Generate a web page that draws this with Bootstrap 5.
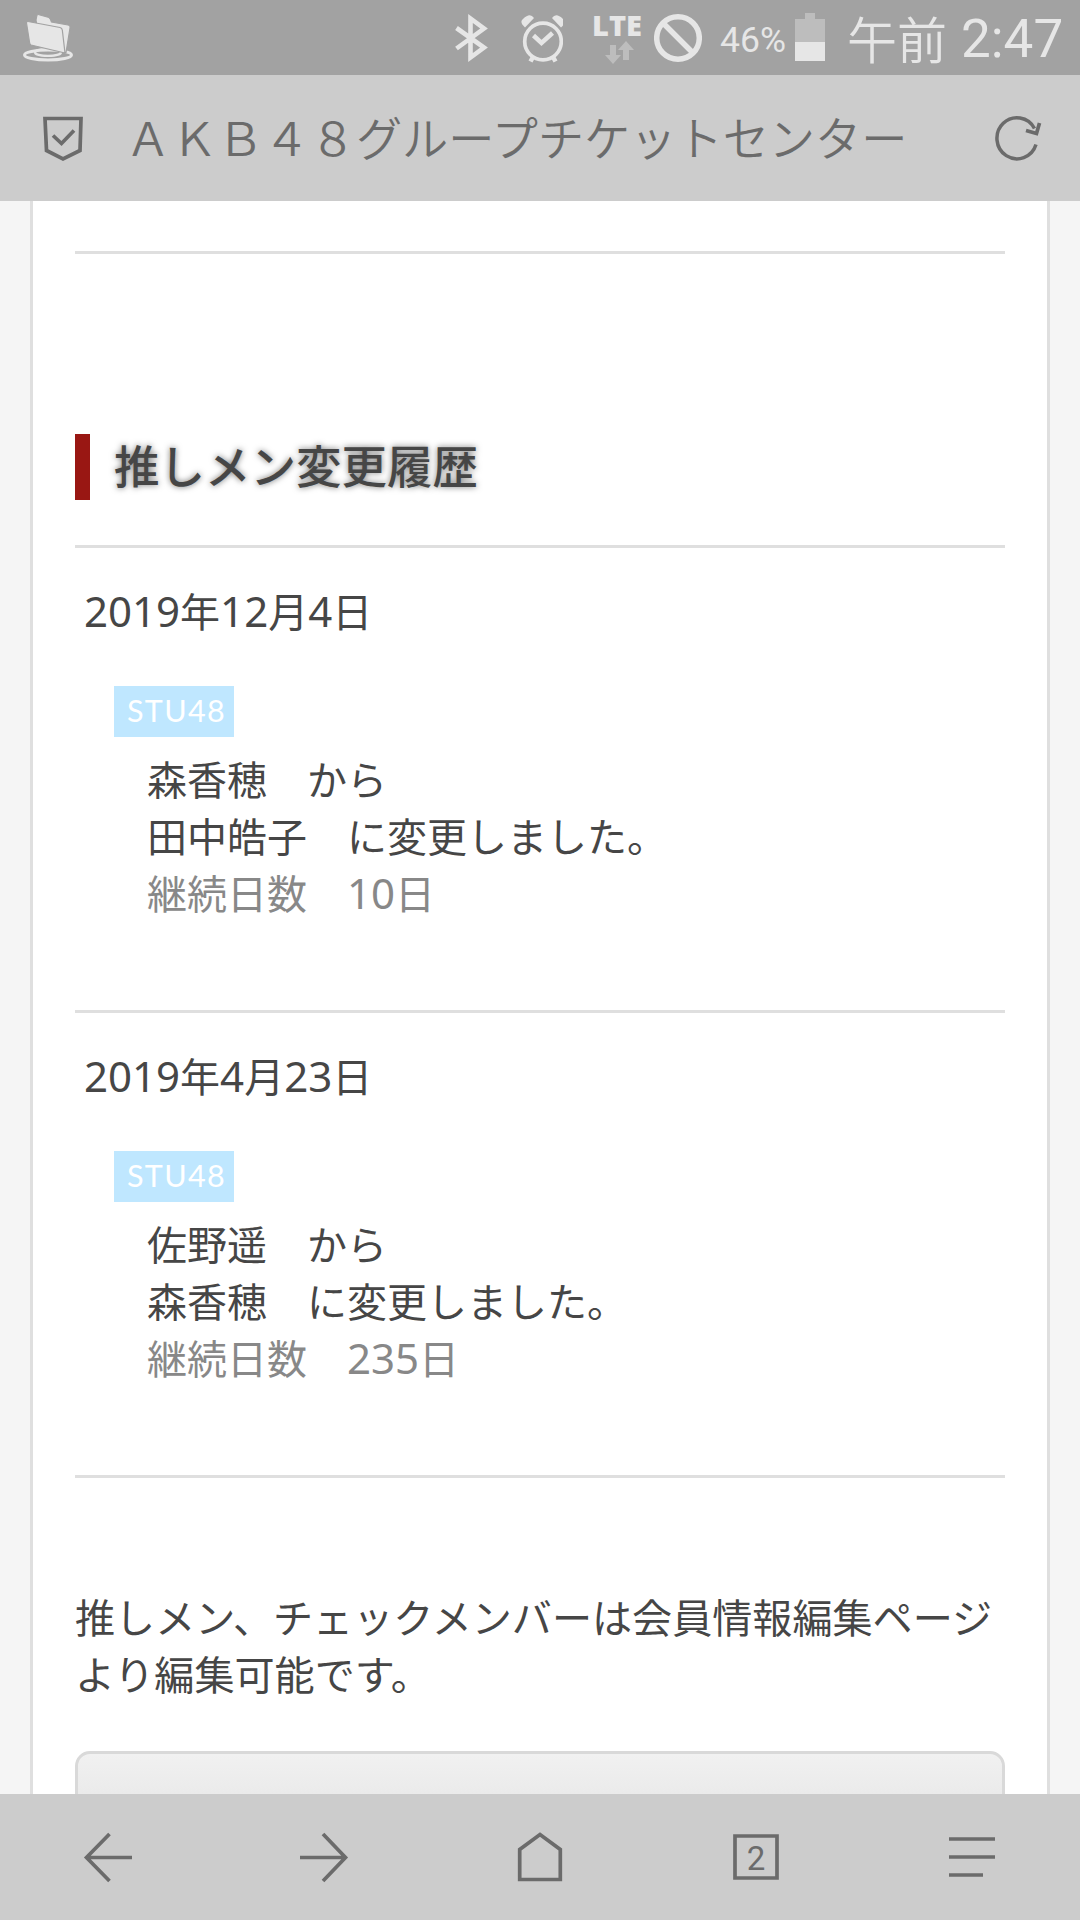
<!DOCTYPE html>
<html lang="ja">
<head>
<meta charset="utf-8">
<meta name="viewport" content="width=device-width, initial-scale=1">
<title>ＡＫＢ４８グループチケットセンター</title>
<link href="https://cdn.jsdelivr.net/npm/bootstrap@5.3.0/dist/css/bootstrap.min.css" rel="stylesheet">
<style>
html,body{height:100%}
body{font-family:"Noto Sans CJK JP",sans-serif;color:#464646;background:#f5f5f5;font-size:40px;line-height:57px;overflow:hidden}
svg{display:block;flex:none}
.phone{width:1080px;height:1920px}
.statusbar{height:75px;background:#a2a2a2;color:#e6e6e6;line-height:75px;font-family:Roboto,"Noto Sans CJK JP",sans-serif}
.pct{font-size:35.5px;width:75px;margin-left:18px;padding-top:3px}
.ampm{font-size:50px;width:100px;margin-left:20px;font-family:"Noto Sans CJK JP",sans-serif;font-weight:350}
.clock{font-size:53px;margin-left:14px;padding-top:2px}
.lte{width:50px;margin-left:29px;height:75px;padding-top:9px}
.lte b{font:800 29px/31px "Open Sans",sans-serif}
.addressbar{height:126px;background:#ccc;color:#6b6b6b}
.site-title{font-size:46.2px;font-weight:350;margin-left:42px;line-height:66px;padding-bottom:5px}
.page{width:1020px;margin:0 30px;border:solid #dfdfdf;border-width:0 3px;background:#fff;padding:50px 42px 0}
.rule{border-top:3px solid #dfdfdf}
.section-title{margin:180px 0 45px;border-left:15px solid #991713;padding-left:24px;font-size:45.5px;line-height:61px;height:66px;font-weight:500;text-shadow:0 0 6px #777}
.entry{height:465px;padding:32px 0 0 9px}
.num{font:42px/40px "Noto Sans",sans-serif}
.day{height:60px;line-height:60px}
.group-tag{width:120px;height:51px;margin:46px 0 13px 30px;background:#bfe7ff;color:#fff;font:30.5px/49px Lato,sans-serif;letter-spacing:1.3px;border-radius:0;padding-left:13px}
.detail{margin-left:63px}
.dim{color:#888}
.note{margin:109px -10px 0 0;font-size:40.1px}
.edit-btn{margin-top:50px;height:100px;border:3px solid #d9d9d9;border-radius:15px;background:linear-gradient(#f1f1f1,#e2e2e2)}
.toolbar{height:126px;background:#ccc;color:#6b6b6b}
.ico{fill:none;stroke:currentColor;stroke-width:3.7}
</style>
<script src="https://cdn.jsdelivr.net/npm/bootstrap@5.3.0/dist/js/bootstrap.bundle.min.js"></script>
</head>
<body>
<div class="phone d-flex flex-column overflow-hidden">
  <header class="statusbar d-flex flex-shrink-0">
    <svg width="80" height="75" fill="#e6e6e6"><ellipse cx="48" cy="55" rx="23.500" ry="5" fill="none" stroke="#e6e6e6" stroke-width="3"/><ellipse cx="48" cy="52.500" rx="13" ry="3.400" fill="none" stroke="#e6e6e6" stroke-width="2.200"/><path stroke="#a2a2a2" stroke-width="1.200" d="M36 20L37 15Q38 14 40 15L49 17.500Q50.500 18.500 51.500 22L68 25Q70.500 25.500 70 28L66 52.500L40 46z"/><path stroke="#a2a2a2" stroke-width="1.200" d="M28 21.500L60 27.500Q62 28 62.300 30L65 53L31 45Q29.500 44 29.500 42L26.500 23Q26.500 21.300 28 21.500z"/></svg>
    <svg width="120" height="75" style="margin-left:363px" viewBox="443 0 120 75" class="ico text-reset"><path stroke-width="4.600" d="M456.500 28L484 47.500L470.500 57.500V18.500L484 28.500L456.500 48.500"/><circle cx="543" cy="41.500" r="18.300"/><path stroke-width="4.500" d="M533.500 35.500L541.500 43L552.500 33M533 57L530.500 61.500M553 57L555.500 61.500"/><path fill="currentColor" stroke="none" d="M525 27.500Q519 22 523 19Q530 12 534 18zM561 27.500Q567 22 563 19Q556 12 552 18z"/></svg>
    <div class="lte d-flex flex-column"><b>LTE</b>
      <svg width="50" height="26" fill="#bdbdbd"><path d="M18 5h6v10h5l-8 9-8-9h5zM31 20h6V10h5L34 1l-8 9h5z"/></svg></div>
    <svg width="48" height="75" class="ico" style="margin-left:12px"><circle cx="24" cy="38" r="21.300" stroke-width="5.500"/><path stroke-width="5.500" d="M9.500 23.500L38.500 52.500"/></svg>
    <span class="pct">46%</span>
    <svg width="32" height="75"><path fill="#bdbdbd" d="M10 13h10v6h10v23H0V19h10z"/><path fill="#e6e6e6" d="M0 42h30v19H0z"/></svg>
    <span class="ampm">午前</span><span class="clock">2:47</span>
  </header>
  <nav class="addressbar d-flex align-items-center flex-shrink-0">
    <svg width="83" height="126" class="ico" stroke-width="3.500"><path d="M45 43.500H81L80 75.500L63 84L46.500 75.500zM53 60.500L61.500 68.500L74 55.500"/></svg>
    <span class="site-title text-nowrap">ＡＫＢ４８グループチケットセンター</span>
    <svg width="60" height="126" viewBox="990 75 60 126" class="ico ms-auto" style="margin-right:30px"><path stroke-width="3.500" d="M1036 144.500A20 20.500 0 1 1 1034.500 128.500"/><path d="M1026 130.500L1036.500 133.500L1039.500 123"/></svg>
  </nav>
  <main class="page flex-grow-1 overflow-hidden">
    <div class="rule"></div>
    <h2 class="section-title">推しメン変更履歴</h2>
    <section class="entry rule">
      <div class="day"><span class="num">2019</span>年<span class="num">12</span>月<span class="num">4</span>日</div>
      <div class="group-tag">STU48</div>
      <div class="detail">森香穂　から<br>田中皓子　に変更しました。<br><span class="dim">継続日数　<span class="num">10</span>日</span></div>
    </section>
    <section class="entry rule">
      <div class="day"><span class="num">2019</span>年<span class="num">4</span>月<span class="num">23</span>日</div>
      <div class="group-tag">STU48</div>
      <div class="detail">佐野遥　から<br>森香穂　に変更しました。<br><span class="dim">継続日数　<span class="num">235</span>日</span></div>
    </section>
    <div class="rule"></div>
    <p class="note">推しメン、チェックメンバーは会員情報編集ページ<br>より編集可能です。</p>
    <div class="edit-btn"></div>
  </main>
  <footer class="toolbar d-flex justify-content-around align-items-center flex-shrink-0">
    <svg width="60" height="60" class="ico"><path d="M54 30.500H8M31.500 7L8.500 30.500L31.500 54"/></svg>
    <svg width="60" height="60" class="ico"><path d="M6 30.500H52M29 7L51.500 30.500L29 54"/></svg>
    <svg width="60" height="60" class="ico"><path d="M9.700 52.500V22.500L30 7.500L50.300 22.500V52.500z"/></svg>
    <svg width="60" height="60"><path class="ico" d="M9 9h42v42H9z"/><text x="30" y="42.500" text-anchor="middle" font-family="Roboto" font-size="33" fill="currentColor">2</text></svg>
    <svg width="60" height="60" class="ico"><path d="M7 12H53M7 30H53M7 48H41"/></svg>
  </footer>
</div>
</body>
</html>
